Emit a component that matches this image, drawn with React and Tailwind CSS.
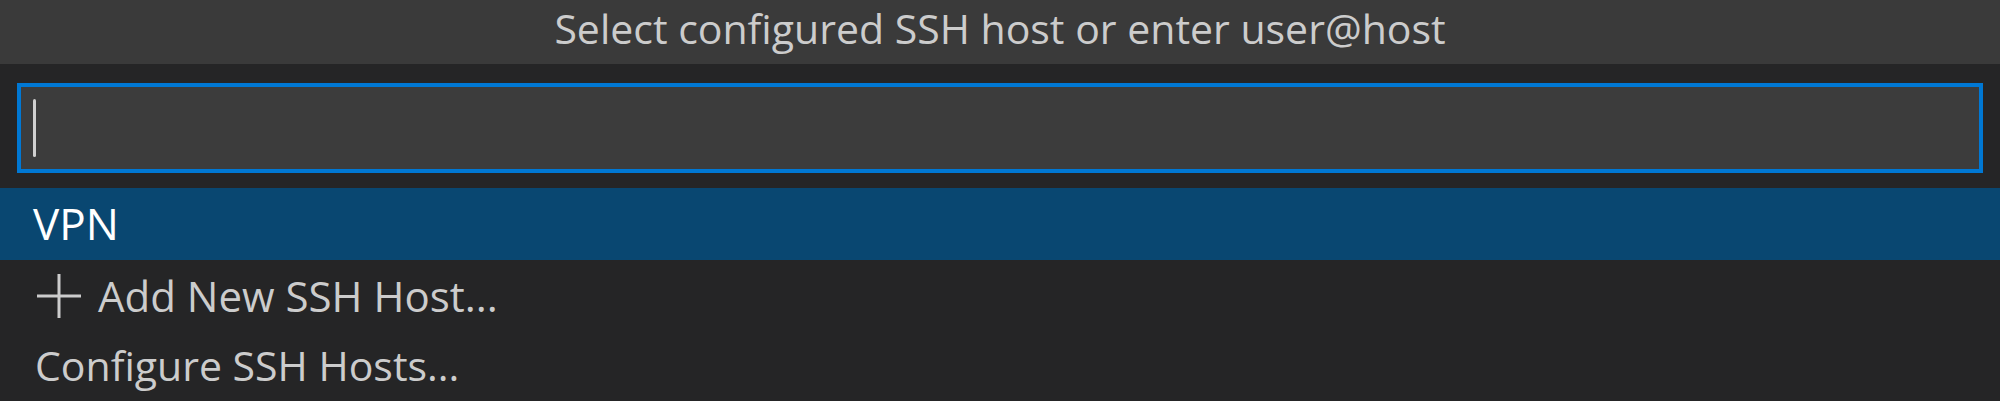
export default function App() {
  return (
    <div className="w-[2000px] h-[401px] bg-[#252526] overflow-hidden text-[#cccccc] font-['Open_Sans',sans-serif]">
      <div className="bg-[#3a3a3a] text-center pb-[8px] text-[41px] leading-[56px]">
        Select configured SSH host or enter user@host
      </div>
      <div className="px-[17px] pt-[19px] pb-[15px]">
        <div className="h-[90px] border-4 border-[#0078d4] bg-[#3c3c3c] flex items-center pl-[12px]">
          <div className="w-[3px] h-[58px] bg-[#d0d0d0] rounded-full" />
        </div>
      </div>
      <div className="text-[42px] leading-[1.3]">
        <div className="h-[72px] bg-[#094771] text-white flex items-center pl-[33px] text-[44px]">VPN</div>
        <div className="h-[72px] flex items-center pl-[36px] gap-[16px]">
          <svg width="46" height="46" viewBox="0 0 46 46" fill="none" stroke="#cccccc" strokeWidth="3">
            <line x1="23" y1="1" x2="23" y2="45" />
            <line x1="1" y1="23" x2="45" y2="23" />
          </svg>
          <span>Add New SSH Host...</span>
        </div>
        <div className="h-[72px] flex items-center pl-[35px] pb-[4px] text-[41px]">Configure SSH Hosts...</div>
      </div>
    </div>
  );
}
